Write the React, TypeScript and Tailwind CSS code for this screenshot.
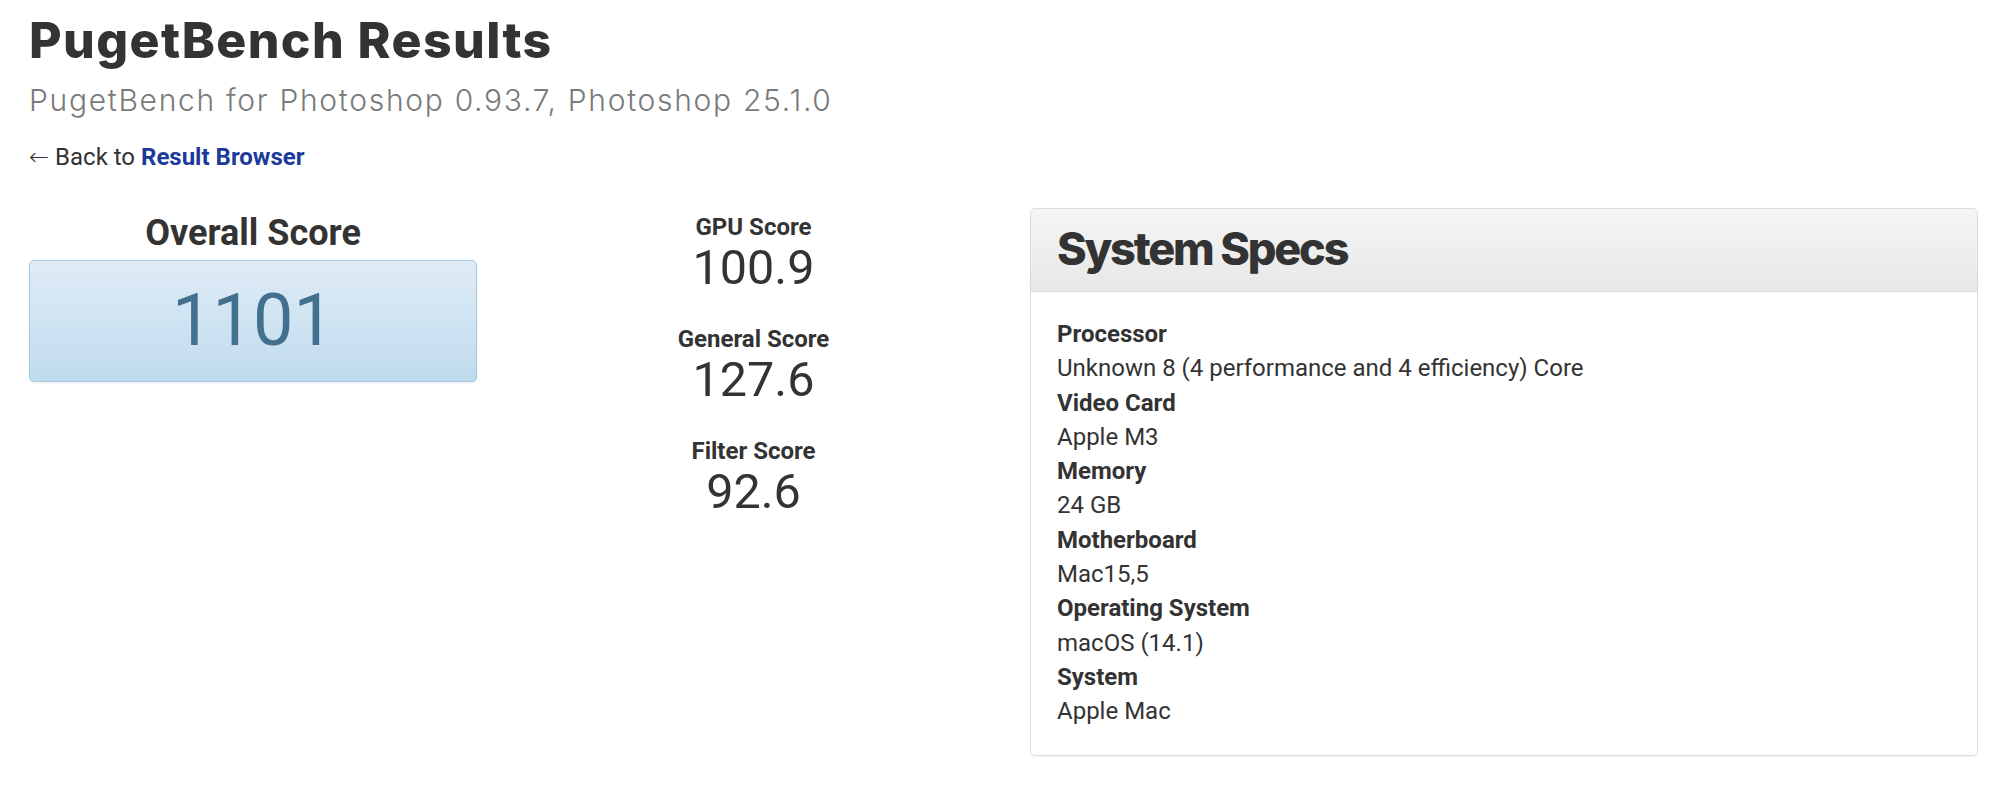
import React from 'react';

interface SubScore {
  label: string;
  value: string;
}

const subScores: SubScore[] = [
  { label: 'GPU Score', value: '100.9' },
  { label: 'General Score', value: '127.6' },
  { label: 'Filter Score', value: '92.6' },
];

const specs: [string, string][] = [
  ['Processor', 'Unknown 8 (4 performance and 4 efficiency) Core'],
  ['Video Card', 'Apple M3'],
  ['Memory', '24 GB'],
  ['Motherboard', 'Mac15,5'],
  ['Operating System', 'macOS (14.1)'],
  ['System', 'Apple Mac'],
];

const headingFont = "font-['Inter','Noto_Sans',sans-serif]";

export default function App() {
  return (
    <div className="min-h-screen bg-white text-[#333] font-['Roboto','Liberation_Sans',sans-serif] pl-[29px] pr-[22px]">
      {/* Page header */}
      <h1 className={`${headingFont} pt-[10px] text-[50px] leading-[60px] font-extrabold tracking-[1.4px] text-[#333]`}>
        PugetBench Results
      </h1>
      <h2 className={`${headingFont} mt-[12px] text-[30px] leading-[36px] font-light tracking-[1.7px] text-[#7a7a7a]`}>
        PugetBench for Photoshop 0.93.7, Photoshop 25.1.0
      </h2>
      <div className="mt-[24px] text-[24px] leading-[30px]">
        <span className="font-['DejaVu_Sans',sans-serif] font-light">←</span> Back to{' '}
        <a href="#" className="font-bold text-[#1b3a9a]">
          Result Browser
        </a>
      </div>

      {/* Scores and specs */}
      <div className="mt-[36px] flex items-start">
        <div className="w-[448px] text-center">
          <div className="text-[36px] leading-[40px] font-bold mt-[5px]">Overall Score</div>
          <div className="mt-[7px] h-[122px] rounded-[5px] border border-[#a3cbe6] bg-gradient-to-b from-[#dfecf6] to-[#c0dbee] flex items-center justify-center shadow-[0_1px_2px_rgba(0,0,0,0.08)]">
            <span className="text-[72px] leading-none text-[#44708f]">1101</span>
          </div>
        </div>

        <div className="flex-1 flex flex-col items-center pt-[4px]">
          {subScores.map((s) => (
            <div key={s.label} className="flex flex-col items-center h-[112px]">
              <div className="text-[24px] leading-[30px] font-bold">{s.label}</div>
              <div className="text-[48.5px] leading-[52px]">{s.value}</div>
            </div>
          ))}
        </div>

        <div className="w-[948px] rounded-[5px] border border-[#dcdcdc] shadow-[0_1px_2px_rgba(0,0,0,0.06)] overflow-hidden">
          <div className="bg-gradient-to-b from-[#f5f5f5] to-[#e8e8e8] border-b border-[#dcdcdc] px-[26px] pt-[15px] pb-[17px]">
            <h3 className={`${headingFont} text-[45px] leading-[50px] font-extrabold tracking-[-2.2px] text-[#333]`}>System Specs</h3>
          </div>
          <div className="px-[26px] pt-[25px] pb-[26px] text-[24px] leading-[34.3px]">
            {specs.map(([k, v]) => (
              <div key={k}>
                <div className="font-bold">{k}</div>
                <div>{v}</div>
              </div>
            ))}
          </div>
        </div>
      </div>
    </div>
  );
}
